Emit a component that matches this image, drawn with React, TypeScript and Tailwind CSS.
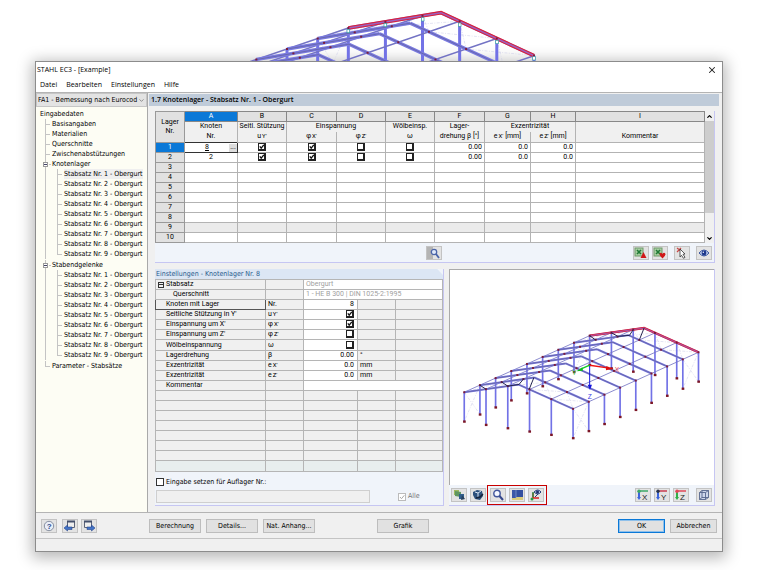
import React from "react";
import clsx from "clsx";
import { X, ChevronDown, ChevronUp } from "lucide-react";

type Point = [number, number];

const beams = Array.from({ length: 9 }, (_, i) => `Stabsatz Nr. ${i + 1} - Obergurt`);

const columns = [
  { letter: "A", width: "w-[53px]" },
  { letter: "B", width: "w-[49px]" },
  { letter: "C", width: "w-[50px]" },
  { letter: "D", width: "w-[49px]" },
  { letter: "E", width: "w-[49px]" },
  { letter: "F", width: "w-[50px]" },
  { letter: "G", width: "w-[46px]" },
  { letter: "H", width: "w-[45px]" },
  { letter: "I", width: "" },
];

const supports = [
  { node: "8", checks: [true, true, false, false] },
  { node: "2", checks: [true, true, false, false] },
];

const settings: { label: string; symbol: React.ReactNode; value?: string; check?: boolean; unit?: string }[] = [
  { label: "Knoten mit Lager", symbol: "Nr.", value: "8" },
  { label: "Seitliche Stützung in Y'", symbol: <Sym base="u" axis="Y'" />, check: true },
  { label: "Einspannung um X'", symbol: <Sym base="φ" axis="X'" />, check: true },
  { label: "Einspannung um Z'", symbol: <Sym base="φ" axis="Z'" />, check: false },
  { label: "Wölbeinspannung", symbol: "ω", check: false },
  { label: "Lagerdrehung", symbol: "β", value: "0.00", unit: "°" },
  { label: "Exzentrizität", symbol: <Sym base="e" axis="X'" />, value: "0.0", unit: "mm" },
  { label: "Exzentrizität", symbol: <Sym base="e" axis="Z'" />, value: "0.0", unit: "mm" },
];

function Sym({ base, axis }: { base: string; axis: string }) {
  return (
    <>
      {base}
      <span className="ml-px text-[6px] leading-none">{axis}</span>
    </>
  );
}

function CheckBox({ checked, label }: { checked: boolean; label: string }) {
  return (
    <span className="relative inline-block size-[8px] align-top">
      <input
        type="checkbox"
        defaultChecked={checked}
        aria-label={label}
        className="peer block size-[8px] appearance-none border border-r-2 border-b-2 border-[#222] bg-white"
      />
      <svg viewBox="0 0 8 8" className="pointer-events-none absolute inset-0 hidden size-[8px] peer-checked:block">
        <path d="M1.8 3.4 L3.2 5.2 L5.8 1.8" fill="none" stroke="#111" strokeWidth="1.3" />
      </svg>
    </span>
  );
}

function IconButton({ label, children }: { label: string; children: React.ReactNode }) {
  return (
    <button
      type="button"
      aria-label={label}
      className="flex h-[14px] w-[16px] shrink-0 items-center justify-center border border-[#c3c3c3] bg-[#e3e3e3]"
    >
      <svg viewBox="0 0 14 12" className="h-[12px] w-[14px]" fill="none">
        {children}
      </svg>
    </button>
  );
}

function TextButton({ children, className }: { children: React.ReactNode; className?: string }) {
  return (
    <button
      type="button"
      className={clsx("h-[14px] border bg-[#e1e1e1] text-center leading-[12px] whitespace-nowrap", className || "w-[52px] border-[#bdbdbd]")}
    >
      {children}
    </button>
  );
}

// Portal frame hall in axonometric view, all points derived from the rear gable
type HallProps = {
  left: Point;
  ridge: Point;
  right: Point;
  step: Point;
  frames: number;
  height: number;
  stroke: number;
};

function Hall({ left, ridge, right, step, frames, height, stroke }: HallProps) {
  const last = frames - 1;
  const move = (p: Point, i: number): Point => [p[0] + step[0] * i, p[1] + step[1] * i];
  const roof = (t: number): Point => {
    const [a, b, k] = t <= 0.5 ? [left, ridge, t * 2] : [ridge, right, t * 2 - 1];
    return [a[0] + (b[0] - a[0]) * k, a[1] + (b[1] - a[1]) * k];
  };
  const foot = (t: number): Point => [left[0] + (right[0] - left[0]) * t, left[1] + (right[1] - left[1]) * t + height];
  const seg = (a: Point, b: Point) => `M${a[0]} ${a[1]}L${b[0]} ${b[1]}`;
  const range = Array.from({ length: frames }, (_, i) => i);
  const ts = [0, 0.2, 0.4, 0.6, 0.8, 1];

  const rafters = range.map((i) => seg(move(left, i), move(ridge, i)) + seg(move(ridge, i), move(right, i))).join("");
  const purlins = ts.map((t) => seg(roof(t), move(roof(t), last))).join("");
  const posts: [Point, Point][] = [
    ...range.map((i): [Point, Point] => [move(left, i), move(foot(0), i)]),
    ...range.map((i): [Point, Point] => [move(right, i), move(foot(1), i)]),
    ...[0.2, 0.4, 0.6, 0.8].flatMap((t): [Point, Point][] => [
      [roof(t), foot(t)],
      [move(roof(t), last), move(foot(t), last)],
    ]),
  ];
  const postPath = posts.map(([a, b]) => seg(a, b)).join("");
  const bracing = [0, last - 1]
    .map(
      (i) =>
        [0, 1].map((t) => seg(move(roof(t), i), move(foot(t), i + 1)) + seg(move(roof(t), i + 1), move(foot(t), i))).join("") +
        ts.slice(1).map((t, n) => seg(move(roof(ts[n]), i), move(roof(t), i + 1)) + seg(move(roof(t), i), move(roof(ts[n]), i + 1))).join("")
    )
    .join("");
  const topChord = `M${left}L${ridge}L${right}`;

  return (
    <g fill="none">
      <path d={bracing} stroke="#c9c9e6" strokeWidth="1.5" strokeDasharray="9 4 3 4" />
      <path d={postPath} stroke="#7272e6" strokeWidth={stroke} />
      <path d={purlins} stroke="#7373c4" strokeWidth={stroke / 2} />
      <path d={rafters} stroke="#7a7ae0" strokeWidth={stroke + 1} />
      <path d={rafters} stroke="#6464a4" strokeWidth="2.5" />
      <path d={topChord} stroke="#dc2038" strokeWidth={stroke + 2} />
      <path d={topChord} stroke="#9a62c0" strokeWidth={stroke / 2} />
      {range.flatMap((i) =>
        ts.map((t) => {
          const [x, y] = move(roof(t), i);
          return <rect key={`${i}-${t}`} x={x - 3} y={y - 3} width="6" height="6" fill="#7c1c3c" />;
        })
      )}
      {posts.map(([, b], i) => (
        <rect key={i} x={b[0] - 3.5} y={b[1] - 3} width="8" height="7" fill="#7c1626" />
      ))}
    </g>
  );
}

function TreeItem({ label, active, last }: { label: string; active?: boolean; last?: boolean }) {
  return (
    <li className="relative flex h-[10px] items-center pl-[7px]">
      <span className={clsx("absolute top-0 left-0 w-px bg-[#c4c4c4]", last ? "h-[5px]" : "h-full")} />
      <span className="absolute top-[5px] left-0 h-px w-[5px] bg-[#c4c4c4]" />
      <a href="#" className={clsx("whitespace-nowrap", active && "bg-[#efefef]")}>
        {label}
      </a>
    </li>
  );
}

function TreeGroup({ label, active }: { label: string; active?: number }) {
  return (
    <li className="relative mb-px">
      <span className="absolute top-0 left-0 h-full w-px bg-[#c4c4c4]" />
      <div className="flex h-[10px] items-center">
        <button
          type="button"
          aria-label={`${label} zuklappen`}
          className="relative -ml-[2px] flex size-[5px] items-center justify-center border border-[#999] bg-white"
        >
          <span className="h-px w-[3px] bg-[#446]" />
        </button>
        <span className="mr-[1px] ml-px h-px w-[2px] bg-[#c4c4c4]" />
        <a href="#">{label}</a>
      </div>
      <ul className="ml-[12px]">
        {beams.map((beam, i) => (
          <TreeItem key={beam} label={beam} active={i === active} last={i === beams.length - 1} />
        ))}
      </ul>
    </li>
  );
}

function Sidebar() {
  return (
    <aside className="flex w-[112px] shrink-0 flex-col border-r border-[#a9a9a9]">
      <label className="relative block">
        <select
          aria-label="Bemessungsfall"
          className="h-[14px] w-full appearance-none border border-[#c6c6c6] bg-[#e3e3e3] pr-[8px] pl-px leading-[12px]"
        >
          <option>FA1 - Bemessung nach Eurocod</option>
        </select>
        <ChevronDown className="pointer-events-none absolute top-[4px] right-[2px] size-[7px] text-[#555]" />
      </label>
      <nav className="grow bg-[#fdfdf4] pt-[2px] pl-[4px]">
        <a href="#" className="flex h-[10px] items-center">
          Eingabedaten
        </a>
        <ul className="ml-[5px]">
          {["Basisangaben", "Materialien", "Querschnitte", "Zwischenabstützungen"].map((item) => (
            <TreeItem key={item} label={item} />
          ))}
          <TreeGroup label="Knotenlager" active={0} />
          <TreeGroup label="Stabendgelenke" />
          <TreeItem label="Parameter  - Stabsätze" last />
        </ul>
      </nav>
    </aside>
  );
}

const head = "border-x border-[#b3b3b3] bg-[#f0f0f0] p-0 font-normal";
const cell = "border border-[#b3b3b3] p-0";
const grid = "w-full table-fixed border-collapse font-['Roboto','Liberation_Sans',sans-serif] text-[7px] leading-[9px]";

function SupportTable() {
  return (
    <table className={clsx(grid, "bg-white text-center")}>
      <colgroup>
        <col className="w-[29px]" />
        {columns.map((c) => (
          <col key={c.letter} className={c.width} />
        ))}
      </colgroup>
      <thead>
        <tr className="h-[10px]">
          <th rowSpan={3} className="border border-[#999] bg-[#e1e1e1] p-0 font-normal">
            Lager
            <br />
            Nr.
          </th>
          {columns.map((c) => (
            <th
              key={c.letter}
              className={clsx("border border-[#888] p-0 font-normal", c.letter === "A" ? "bg-[#0a78d7] text-white" : "bg-[#e1e1e1]")}
            >
              {c.letter}
            </th>
          ))}
        </tr>
        <tr className="h-[10px]">
          <th className={head}>Knoten</th>
          <th className={clsx(head, "whitespace-nowrap")}>Seitl. Stützung</th>
          <th colSpan={2} className={head}>Einspannung</th>
          <th className={head}>Wölbeinsp.</th>
          <th className={head}>Lager-</th>
          <th colSpan={2} className={head}>Exzentrizität</th>
          <th className={head} />
        </tr>
        <tr className="h-[11px]">
          <th className={head}>Nr.</th>
          <th className={head}><Sym base="u" axis="Y'" /></th>
          <th className={head}><Sym base="φ" axis="X'" /></th>
          <th className={head}><Sym base="φ" axis="Z'" /></th>
          <th className={head}>ω</th>
          <th className={clsx(head, "whitespace-nowrap")}>drehung β [°]</th>
          <th className={head}><Sym base="e" axis="X'" /> [mm]</th>
          <th className={head}><Sym base="e" axis="Z'" /> [mm]</th>
          <th className={head}>Kommentar</th>
        </tr>
      </thead>
      <tbody>
        {Array.from({ length: 10 }, (_, i) => {
          const row = supports[i];
          return (
            <tr key={i} className={clsx("h-[10px]", i === 8 && "bg-[#ebebeb]")}>
              <th
                className={clsx("border border-[#999] p-0 font-normal", i === 0 ? "bg-[#0a78d7] text-white" : "bg-[#e1e1e1]")}
              >
                {i + 1}
              </th>
              {i === 0 ? (
                <td className="border border-[#333] p-0">
                  <div className="flex h-[9px] items-center">
                    <input
                      aria-label="Knoten Nr."
                      defaultValue="8"
                      className="h-[9px] w-full min-w-0 text-center leading-[9px] underline"
                    />
                    <button type="button" aria-label="Knoten wählen" className="h-[8px] w-[8px] shrink-0 bg-[#ddd] leading-[5px]">
                      ...
                    </button>
                  </div>
                </td>
              ) : (
                <td className={cell}>{row?.node}</td>
              )}
              {[0, 1, 2, 3].map((n) => (
                <td key={n} className={cell}>
                  {row && <CheckBox checked={row.checks[n]} label={`Zeile ${i + 1}, Spalte ${columns[n + 1].letter}`} />}
                </td>
              ))}
              {["0.00", "0.0", "0.0"].map((value, n) => (
                <td key={n} className={clsx(cell, "pr-[2px] text-right")}>
                  {row && value}
                </td>
              ))}
              <td className={cell} />
            </tr>
          );
        })}
      </tbody>
    </table>
  );
}

function Excel() {
  return (
    <>
      <rect x="1" y="1" width="8" height="8" fill="#a9cfa2" stroke="#6f9a6b" />
      <path d="M3 3l4 4M7 3l-4 4" stroke="#1f7a35" strokeWidth="1.6" />
    </>
  );
}

function SettingsPanel() {
  const line = "border border-[#b5b5b5] p-0";
  return (
    <section className="flex w-[289px] shrink-0 flex-col border-r border-b border-[#c6c6f2] bg-[#f0f4fa]">
      <h2 className="h-[10px] bg-[#dce6f4] pl-px leading-[10px] text-[#285a8c] [clip-path:polygon(0_0,98%_0,100%_60%,100%_100%,0_100%)]">
        Einstellungen - Knotenlager Nr. 8
      </h2>
      <table className={clsx(grid, "bg-[#f0f0f0]")}>
        <colgroup>
          <col className="w-[110px]" />
          <col className="w-[38px]" />
          <col className="w-[54px]" />
          <col className="w-[38px]" />
          <col />
        </colgroup>
        <tbody>
          <tr className="h-[10px]">
            <td className={line}>
              <div className="flex items-center gap-[2px] pl-[2px]">
                <button type="button" aria-label="Stabsatz zuklappen" className="flex size-[6px] items-center justify-center border border-[#333]">
                  <span className="h-px w-[4px] bg-[#333]" />
                </button>
                Stabsatz
              </div>
            </td>
            <td className={line} />
            <td colSpan={3} className={clsx(line, "bg-white pl-[2px] text-[#a0a0a0]")}>Obergurt</td>
          </tr>
          <tr className="h-[10px]">
            <td className={clsx(line, "pl-[17px]")}>Querschnitt</td>
            <td className={line} />
            <td colSpan={3} className={clsx(line, "bg-white pl-[2px] text-[#a0a0a0]")}>1 - HE B 300 | DIN 1025-2:1995</td>
          </tr>
          {settings.map((row, i) => (
            <tr key={i} className={i === 4 ? "h-[11px]" : "h-[10px]"}>
              <td className={clsx("border p-0 pl-[10px]", i === 0 ? "border-[#555]" : "border-[#b5b5b5]")}>{row.label}</td>
              <td className={clsx(line, "pl-[2px]")}>
                <div className="h-[9px]">{row.symbol}</div>
              </td>
              <td className={clsx(line, "bg-white pr-[3px] text-right")}>
                <div className="h-[9px]">
                  {row.check === undefined ? row.value : <CheckBox checked={row.check} label={row.label} />}
                </div>
              </td>
              <td className={clsx(line, "pl-[2px]")}>{row.unit}</td>
              <td className={line} />
            </tr>
          ))}
          <tr className="h-[10px]">
            <td className={clsx(line, "pl-[10px]")}>Kommentar</td>
            <td className={line} />
            <td colSpan={3} className={clsx(line, "bg-white")} />
          </tr>
          {Array.from({ length: 8 }, (_, i) => (
            <tr key={i} className={clsx(i === 7 ? "h-[11px] bg-[#e8eeee]" : "h-[10px]")}>
              {[0, 1, 2, 3, 4].map((n) => (
                <td key={n} className={line} />
              ))}
            </tr>
          ))}
        </tbody>
      </table>
      <div className="flex grow flex-col justify-end gap-[3px] px-px pb-[2px]">
        <label className="flex items-center gap-[2px]">
          <input type="checkbox" className="size-[8px] appearance-none border border-[#333] bg-white" />
          Eingabe setzen für Auflager Nr.:
        </label>
        <div className="flex items-center">
          <input aria-label="Auflager Nr." disabled className="h-[13px] w-[214px] border border-[#cfcfcf] bg-[#f0f0f0]" />
          <label className="ml-[28px] flex items-center gap-[2px] text-[#777]">
            <span className="relative size-[8px]">
              <input type="checkbox" disabled defaultChecked className="block size-[8px] appearance-none border border-[#bbb] bg-white" />
              <svg viewBox="0 0 8 8" className="absolute inset-0 size-[8px]">
                <path d="M2 4l1.5 1.7L6.3 2.3" fill="none" stroke="#aaa" />
              </svg>
            </span>
            Alle
          </label>
        </div>
      </div>
    </section>
  );
}

function AxisIcon({ axis, a, b }: { axis: string; a: string; b: string }) {
  return (
    <>
      <path d="M3 2H12" stroke={a} strokeWidth="1.5" />
      <path d="M3 2V9" stroke={b} strokeWidth="2" />
      <path d="M1 8l2 3 2-3z" fill={b} />
      <circle cx="3" cy="2.2" r="1.7" fill={axis === "Y" ? "#26334d" : a} />
      <text x="6" y="10.5" fontSize="8" fontFamily="Liberation Sans, sans-serif" fill="#222">
        {axis}
      </text>
    </>
  );
}

function Preview() {
  return (
    <section className="flex min-w-0 grow flex-col border-r border-b border-[#c6c6f2] bg-[#f0f4fa]">
      <div className="h-[216px] border-t border-l border-[#aaa] bg-white">
        <svg viewBox="2 -122 790 648" className="h-full w-full" role="img" aria-label="3D-Modell der Halle">
          <Hall left={[420, 76]} ridge={[584, 53]} right={[748, 126]} step={[-47.25, 21.3]} frames={9} height={88} stroke={5} />
          <path
            d="M420 76l18 13M485 67l20 11 35-3 11-17M584 53l-14 35M89 225l18 12M154 215l19 13 34-5 14-17M252 202l-14 35"
            fill="none"
            stroke="#23234f"
            strokeWidth="3"
          />
          <path d="M420 165V228" stroke="#1515dd" strokeWidth="3" />
          <path d="M414 224h13l-6 16z" fill="#1515dd" />
          <path d="M420 165L474 173" stroke="#ee1010" strokeWidth="4" />
          <path d="M470 167l22 9-23 4z" fill="#dd1010" />
          <path d="M420 165l-27 12" stroke="#10cc20" strokeWidth="4" />
          <path d="M398 171l-18 12 20-1z" fill="#10b820" />
          <g fontFamily="Liberation Sans, sans-serif" fontSize="20">
            <text x="414" y="266" fill="#3838e8">Z</text>
            <text x="496" y="186" fill="#f05050">X</text>
            <text x="367" y="194" fill="#20c830">Y</text>
          </g>
        </svg>
      </div>
      <div className="flex h-[20px] items-center pr-[2px] pl-[2px]">
        <div className="flex gap-[3px]">
          <IconButton label="Rendern">
            <path d="M2 1h5v5H2z" fill="#9db85e" />
            <path d="M3 2l6 1v5l-6-1z" fill="#5f9660" />
            <path d="M7 5h5v5H7z" fill="#315f8c" />
            <path d="M10 6l3 4-4 1z" fill="#26415f" />
          </IconButton>
          <IconButton label="Ansicht drehen">
            <path d="M2 3l4-2 5 1 1 5-3 4-5-1-2-4z" fill="#2c507c" />
            <path d="M4 3l3 1 3-2M7 4v4" stroke="#d6e4f4" />
            <path d="M5 9l4-1 3-3" stroke="#14233b" strokeWidth="1.5" />
          </IconButton>
        </div>
        <div className="ml-px flex gap-[3px] border border-[#c80000] px-[2px] py-[2px]">
          <IconButton label="Zoom">
            <circle cx="6" cy="4.5" r="3.2" fill="#f5f8ff" stroke="#42569c" strokeWidth="1.4" />
            <path d="M8.5 7l3.5 4" stroke="#36488c" strokeWidth="2" />
          </IconButton>
          <IconButton label="Fenster">
            <path d="M2 1h11v10H2z" fill="#d9cc7c" />
            <path d="M2 1h4v8H2z" fill="#3c58a8" />
            <path d="M6 1h7v7H6z" fill="#3450a0" />
            <path d="M6 1v8" stroke="#8ba0d0" strokeWidth=".7" />
          </IconButton>
          <IconButton label="Sichtbarkeit">
            <path d="M4 4v5h6" stroke="#d82020" strokeWidth="1.5" />
            <path d="M4 3v5" stroke="#2c8c44" strokeWidth="1.5" />
            <circle cx="3" cy="10" r="1.5" fill="#28a040" />
            <path d="M5 3q4-4 7 0q-3 4-7 0z" fill="#b4c4e6" stroke="#26407c" />
            <circle cx="8.5" cy="3" r="1.5" fill="#1c306c" />
            <path d="M9 5L6 8" stroke="#26407c" />
          </IconButton>
        </div>
        <div className="ml-auto flex gap-[3px]">
          <IconButton label="Ansicht X"><AxisIcon axis="X" a="#3ca868" b="#3c64dc" /></IconButton>
          <IconButton label="Ansicht Y"><AxisIcon axis="Y" a="#c83c50" b="#3c64dc" /></IconButton>
          <IconButton label="Ansicht Z"><AxisIcon axis="Z" a="#e04858" b="#30b048" /></IconButton>
        </div>
        <div className="ml-[7px] flex">
          <IconButton label="Isometrie">
            <path
              d="M2.5 3.5h6v7h-6zM5 1.5h6.5v7H5zM2.5 3.5l2.5-2M8.5 3.5l3-2M8.5 10.5l3-2M2.5 10.5l2.5-2"
              fill="#cdd6ea"
              stroke="#56658c"
              strokeWidth=".9"
            />
          </IconButton>
        </div>
      </div>
    </section>
  );
}

export default function App() {
  return (
    <div className="min-h-screen overflow-hidden bg-white pb-[18px] font-['DejaVu_Sans_Condensed','DejaVu_Sans',sans-serif] text-[7px] text-black">
      <div className="pl-[245px]">
        <svg viewBox="0 -15 930 183" className="block h-[61px] w-[310px]" aria-hidden="true">
          <Hall left={[310, 69]} ridge={[588, 23]} right={[867, 152]} step={[-92, 31.5]} frames={8} height={180} stroke={9} />
          {[[310, 78], [421, 60], [533, 43], [644, 59], [756, 111], [867, 160]].map(([x, y]) => (
            <rect key={x} x={x - 4} y={y - 5} width="8" height="10" fill="#fff" stroke="#38a0a0" strokeWidth="2" />
          ))}
        </svg>
      </div>

      <div className="mr-[37px] ml-[35px] border border-[#8c8c8c] bg-[#f0f0f0] shadow-[0_3px_14px_3px_rgba(0,0,0,0.28)]">
        <header className="bg-white font-['Open_Sans',sans-serif] leading-[10px]">
          <div className="flex h-[16px] items-center justify-between pr-[5px] pl-px">
            <h1>STAHL EC3 - [Example]</h1>
            <button type="button" aria-label="Schließen">
              <X className="size-[10px] text-[#222]" strokeWidth={2.5} />
            </button>
          </div>
          <nav className="flex h-[14px] items-center gap-[9px] pl-[4px]">
            {["Datei", "Bearbeiten", "Einstellungen", "Hilfe"].map((item) => (
              <button key={item} type="button">{item}</button>
            ))}
          </nav>
        </header>

        <div className="flex border-t border-b border-[#b4b4b4]">
          <Sidebar />
          <main className="min-w-0 grow pt-px pb-[6px] pl-px">
            <h2 className="mr-[3px] h-[12px] bg-[#bfcbd9] pl-[2px] font-['Open_Sans',sans-serif] leading-[12px] font-semibold">
              1.7 Knotenlager - Stabsatz Nr. 1 - Obergurt
            </h2>
            <div className="pt-[5px] pr-[7px] pl-[6px]">
              <section className="border-r border-b border-[#c6c6f2] bg-[#f0f4fa]">
                <div className="flex">
                  <div className="min-w-0 grow">
                    <SupportTable />
                  </div>
                  <div className="flex w-[9px] shrink-0 flex-col items-center bg-[#f0f0f0]">
                    <button type="button" aria-label="Nach oben" className="flex h-[10px] items-center">
                      <ChevronUp className="size-[7px]" strokeWidth={4} />
                    </button>
                    <div className="h-[92px] w-full bg-[#cdcdcd]" />
                    <button type="button" aria-label="Nach unten" className="mt-auto flex h-[10px] items-center">
                      <ChevronDown className="size-[7px]" strokeWidth={4} />
                    </button>
                  </div>
                </div>
                <div className="grid h-[19px] grid-cols-[1fr_auto_1fr] items-center pr-[2px]">
                  <span />
                  <IconButton label="Suchen">
                    <path d="M0 0h6v12H0z" fill="#b4b4b4" />
                    <circle cx="7" cy="5" r="2.7" fill="#dfe8fa" stroke="#4a64a8" strokeWidth="1.3" />
                    <path d="M9 7l3 4" stroke="#4a64a8" strokeWidth="1.8" />
                  </IconButton>
                  <div className="flex justify-end gap-[6px]">
                    <div className="flex gap-[3px]">
                      <IconButton label="Excel-Export">
                        <Excel />
                        <path d="M9.5 5l3 6h-6z" fill="#d01818" />
                      </IconButton>
                      <IconButton label="Excel-Import">
                        <Excel />
                        <path d="M6.5 7q1.5-2.5 3 0q1.5-2.5 3 0q0 2-3 4.5q-3-2.5-3-4.5z" fill="#d01818" />
                      </IconButton>
                    </div>
                    <IconButton label="Auswählen">
                      <path d="M2 1l4 3M6 1L2 5" stroke="#c84848" strokeWidth="1.2" />
                      <path d="M5 2l5 5-2 .3 2 3-1.5 1-2-3L5 10z" fill="#fff" stroke="#333" strokeWidth=".8" />
                    </IconButton>
                    <IconButton label="Ansicht">
                      <path d="M2 6q5-6 10 0q-5 6-10 0z" fill="#b9c9ea" stroke="#3c58a0" />
                      <circle cx="7" cy="6" r="2.4" fill="#1c388c" />
                      <circle cx="6.3" cy="5.3" r=".7" fill="#fff" />
                    </IconButton>
                  </div>
                </div>
              </section>
              <div className="mt-[6px] flex gap-[5px]">
                <SettingsPanel />
                <Preview />
              </div>
            </div>
          </main>
        </div>

        <footer>
          <div className="flex items-center border-b border-[#c4c4c4] px-[5px] pt-[6px] pb-[5px]">
            <IconButton label="Hilfe">
              <circle cx="7" cy="6" r="4.7" fill="#e9eef8" stroke="#8890a0" />
              <text x="4.8" y="9" fontSize="8" fontWeight="bold" fontFamily="Liberation Sans, sans-serif" fill="#2c488c">?</text>
            </IconButton>
            <div className="ml-[5px] flex gap-[3px]">
              <IconButton label="Vorheriges">
                <path d="M4.5 1.5h7v6h-7z" fill="#eee" stroke="#5c6478" />
                <path d="M4 1.5h8" stroke="#44506c" strokeWidth="2" />
                <path d="M1 8l3.5-3v2H9v2.5H4.5V11z" fill="#4474c8" stroke="#26468c" strokeWidth=".6" />
              </IconButton>
              <IconButton label="Nächstes">
                <path d="M2.5 1.5h7v6h-7z" fill="#eee" stroke="#5c6478" />
                <path d="M2 1.5h8" stroke="#44506c" strokeWidth="2" />
                <path d="M13 8L9.5 5v2H5v2.5h4.5V11z" fill="#4474c8" stroke="#26468c" strokeWidth=".6" />
              </IconButton>
            </div>
            <div className="ml-[52px] flex gap-[5px]">
              <TextButton>Berechnung</TextButton>
              <TextButton>Details...</TextButton>
              <TextButton>Nat. Anhang...</TextButton>
            </div>
            <div className="ml-[62px]">
              <TextButton>Grafik</TextButton>
            </div>
            <div className="ml-auto flex gap-[5px]">
              <TextButton className="w-[47px] border-[#0a78d7] inset-ring inset-ring-[#8fc0ea]">OK</TextButton>
              <TextButton className="w-[47px] border-[#bdbdbd]">Abbrechen</TextButton>
            </div>
          </div>
          <div className="h-[12px]" />
        </footer>
      </div>
    </div>
  );
}
